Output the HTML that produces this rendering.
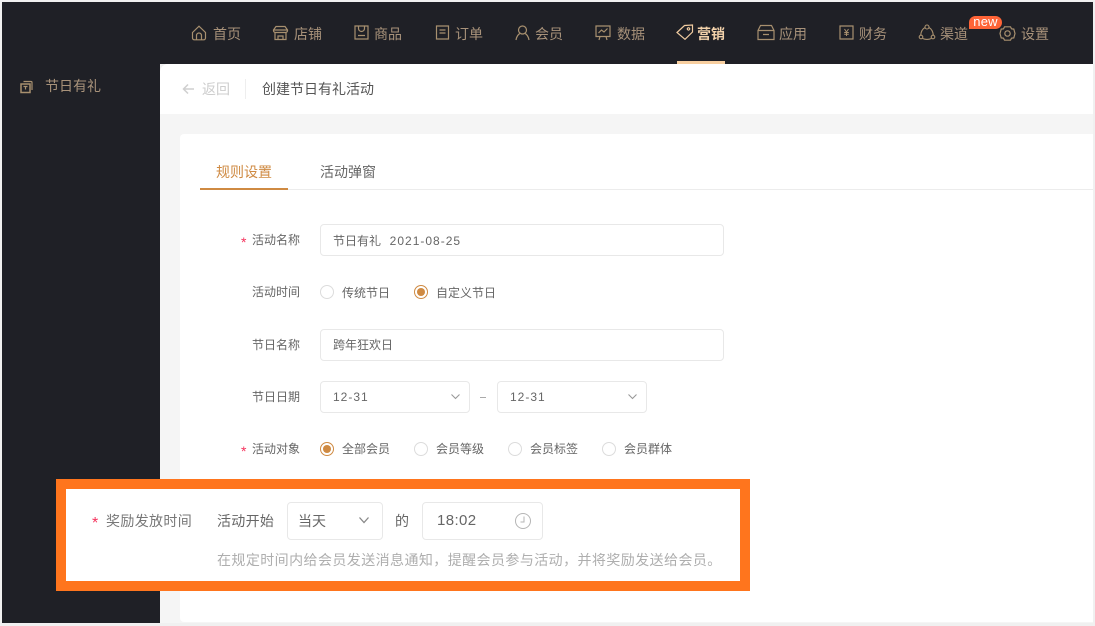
<!DOCTYPE html>
<html><head><meta charset="utf-8">
<style>
html,body{margin:0;padding:0}
body{width:1095px;height:626px;position:relative;overflow:hidden;background:#f0f0f0;font-family:"Liberation Sans","Noto Sans CJK SC",sans-serif;}
.a{position:absolute;white-space:nowrap}
.n{position:absolute;top:24px;height:20px;line-height:20px;font-size:14px;color:#a8927a;white-space:nowrap}
svg.i{position:absolute;fill:none;stroke:#a8906f;stroke-width:1.2}
.l{position:absolute;font-size:12px;line-height:16px;color:#666;white-space:nowrap}
.s{position:absolute;font-size:14px;line-height:16px;color:#f5325c;white-space:nowrap}
.b{position:absolute;box-sizing:border-box;border:1px solid #e8e8e8;border-radius:4px;background:#fff;height:32px;line-height:31px;font-size:12px;color:#666;padding-left:12px;white-space:nowrap}
.d{letter-spacing:1px}
.r{position:absolute;box-sizing:border-box;width:14px;height:14px;border:1px solid #dcdcdc;border-radius:50%;background:#fff}
.r.on{border-color:#cf8a42}
.r.on:after{content:"";position:absolute;left:2px;top:2px;width:8px;height:8px;border-radius:50%;background:#cf8a42}
</style></head><body>
<div class="a" style="left:2px;top:2px;width:1091px;height:62px;background:#1f2026"></div>
<div class="a" style="left:2px;top:64px;width:158px;height:559px;background:#1f2026"></div>
<div class="a" style="left:160px;top:64px;width:933px;height:559px;background:#f5f5f5;border-top-left-radius:8px"></div>
<div class="a" style="left:160px;top:64px;width:933px;height:50px;background:#fff;border-top-left-radius:8px"></div>
<div class="a" style="left:180px;top:134px;width:913px;height:488px;background:#fff;border-radius:4px 0 0 4px"></div>

<svg class="i" style="left:191px;top:25px" width="16" height="16" viewBox="0 0 16 16"><path d="M1.500 7.500 8 1.200l6.500 6.300V13a1.800 1.800 0 0 1-1.800 1.800H3.300A1.800 1.800 0 0 1 1.500 13zM5.500 14.800V10.500a2.500 2.500 0 0 1 5 0v4.300"/></svg>
<div class="n" style="left:213px">首页</div>
<svg class="i" style="left:272px;top:25px" width="17" height="16" viewBox="0 0 17 16"><path d="M4 1.500h9l2.500 3.500v.8a2 2 0 0 1-2.300 1.700H3.800A2 2 0 0 1 1.500 5.800V5zM1.500 5h14M3 7.500v7h11v-7M6 14.500v-3.500h5v3.500"/></svg>
<div class="n" style="left:294px">店铺</div>
<svg class="i" style="left:354px;top:25px" width="15" height="15" viewBox="0 0 15 15"><path d="M1 1h13v13H1zM4.500 1v2.500a3 3 0 0 0 6 0V1M4 10.500h7"/></svg>
<div class="n" style="left:374px">商品</div>
<svg class="i" style="left:435px;top:25px" width="15" height="15" viewBox="0 0 15 15"><path d="M1.500 1h12v13h-12zM4.500 5h6M4.500 8h6"/></svg>
<div class="n" style="left:455px">订单</div>
<svg class="i" style="left:515px;top:25px" width="15" height="16" viewBox="0 0 15 16"><circle cx="7.500" cy="5" r="4"/><path d="M1 15c.5-3.500 2.500-6 4-6.500M14 15c-.5-3.500-2.500-6-4-6.500"/></svg>
<div class="n" style="left:535px">会员</div>
<svg class="i" style="left:595px;top:25px" width="16" height="16" viewBox="0 0 16 16"><path d="M1 1h14v10.500H1zM3.500 8 6.500 5l2.500 2L12.500 3.500M5 11.500 4 15M11 11.500l1 3.500"/></svg>
<div class="n" style="left:617px">数据</div>
<svg class="i" style="left:676px;top:24px;stroke:#f0cba0" width="18" height="16" viewBox="0 0 18 16"><path d="M1 8.500 8.500 1.500 16.500 1v7L9 15.300zM12.500 3.700a1.200 1.200 0 1 0 .01 0"/></svg>
<div class="n" style="left:697px;color:#f3d2ab;font-weight:bold">营销</div>
<div class="a" style="left:677px;top:61px;width:48px;height:3px;background:#f8cfa0"></div>
<svg class="i" style="left:757px;top:24px" width="18" height="17" viewBox="0 0 18 17"><path d="M1 6.500 3.500 1.500h11L17 6.500v9H1zM1 6.500h16M6 10.500h6"/></svg>
<div class="n" style="left:779px">应用</div>
<svg class="i" style="left:839px;top:25px" width="15" height="15" viewBox="0 0 15 15"><path d="M1 1h13v13H1z"/><path stroke-width="1" d="M5.500 4 7.500 7l2-3M5.200 7.500h4.600M5.200 9.300h4.600M7.500 7v4"/></svg>
<div class="n" style="left:859px">财务</div>
<svg class="i" style="left:918px;top:24px;stroke-width:1.100" width="18" height="17" viewBox="0 0 18 17"><circle cx="9" cy="3" r="2"/><circle cx="3" cy="13" r="1.800"/><circle cx="15" cy="13" r="1.800"/><path d="M7 3.500C4.500 5 3 7.500 2.700 11.200M11 3.500c2.500 1.500 4 4 4.300 7.700M4.600 14.500c2.800 1.200 6 1.200 8.800 0"/></svg>
<div class="n" style="left:940px">渠道</div>
<div class="a" style="left:969px;top:16px;width:33px;height:13px;background:#ff6437;border-radius:7px 7px 7px 0;color:#fff;font-size:13px;line-height:11px;text-align:center;letter-spacing:.2px">new</div>
<svg class="i" style="left:999px;top:25px" width="17" height="17" viewBox="0 0 17 17"><path d="M5.500 1.800h6l1 2 2.300.3 1.200 4.400-1.200 4.400-2.300.3-1 2h-6l-1-2-2.300-.3L1 8.500l1.200-4.400 2.300-.3z"/><circle cx="8.500" cy="8.500" r="2.700"/></svg>
<div class="n" style="left:1021px">设置</div>

<svg class="i" style="left:20px;top:80px;stroke:#a8906f" width="13" height="14" viewBox="0 0 13 14"><path d="M3.500 1.500h7.500a1 1 0 0 1 1 1V10"/><path stroke-width="1.500" d="M1 4h9v8.500H1z"/><path d="M3.500 6.500h4M5.500 6.500v3"/></svg>
<div class="a" style="left:45px;top:77px;font-size:14px;line-height:18px;color:#a8927a">节日有礼</div>

<svg class="a" style="left:182px;top:83px" width="13" height="12" viewBox="0 0 13 12" fill="none" stroke="#cfcfcf" stroke-width="1.500"><path d="M1.500 6h10.500M6 1.500 1.500 6 6 10.500"/></svg>
<div class="a" style="left:202px;top:80px;font-size:14px;line-height:18px;color:#cdcdcd">返回</div>
<div class="a" style="left:245px;top:79px;width:1px;height:20px;background:#eeeeee"></div>
<div class="a" style="left:262px;top:80px;font-size:14px;line-height:18px;color:#555">创建节日有礼活动</div>

<div class="a" style="left:216px;top:163px;font-size:14px;line-height:18px;color:#cf8a42">规则设置</div>
<div class="a" style="left:320px;top:163px;font-size:14px;line-height:18px;color:#666">活动弹窗</div>
<div class="a" style="left:200px;top:189px;width:893px;height:1px;background:#ececec"></div>
<div class="a" style="left:200px;top:188px;width:88px;height:2px;background:#cf8a42"></div>

<div class="s" style="left:241px;top:234px">*</div>
<div class="l" style="left:252px;top:232px">活动名称</div>
<div class="b" style="left:320px;top:224px;width:404px;line-height:32px">节日有礼&nbsp;&nbsp;<span class="d" style="margin-left:2px">2021-08-25</span></div>

<div class="l" style="left:252px;top:284px">活动时间</div>
<div class="r" style="left:320px;top:285px"></div>
<div class="l" style="left:342px;top:285px">传统节日</div>
<div class="r on" style="left:414px;top:285px"></div>
<div class="l" style="left:436px;top:285px">自定义节日</div>

<div class="l" style="left:252px;top:337px">节日名称</div>
<div class="b" style="left:320px;top:329px;width:404px">跨年狂欢日</div>

<div class="l" style="left:252px;top:389px">节日日期</div>
<div class="b" style="left:320px;top:381px;width:150px"><span class="d">12-31</span></div>
<svg class="a" style="left:450px;top:393px" width="11" height="8" viewBox="0 0 11 8" fill="none" stroke="#999" stroke-width="1.100"><path d="M1.500 1.500 5.500 5.500 9.500 1.500"/></svg>
<div class="a" style="left:480px;top:397px;width:6px;height:1px;background:#aaa"></div>
<div class="b" style="left:497px;top:381px;width:150px"><span class="d">12-31</span></div>
<svg class="a" style="left:627px;top:393px" width="11" height="8" viewBox="0 0 11 8" fill="none" stroke="#999" stroke-width="1.100"><path d="M1.500 1.500 5.500 5.500 9.500 1.500"/></svg>

<div class="s" style="left:241px;top:443px">*</div>
<div class="l" style="left:252px;top:441px">活动对象</div>
<div class="r on" style="left:320px;top:442px"></div>
<div class="l" style="left:342px;top:441px">全部会员</div>
<div class="r" style="left:414px;top:442px"></div>
<div class="l" style="left:436px;top:441px">会员等级</div>
<div class="r" style="left:508px;top:442px"></div>
<div class="l" style="left:530px;top:441px">会员标签</div>
<div class="r" style="left:602px;top:442px"></div>
<div class="l" style="left:624px;top:441px">会员群体</div>

<div class="a" style="left:56px;top:479px;width:694px;height:112px;box-sizing:border-box;border:10px solid #ff751d;background:#fff"></div>
<div class="s" style="left:92px;top:515px;font-size:16px;line-height:18px">*</div>
<div class="a" style="left:106px;top:512px;font-size:14px;line-height:18px;color:#777;letter-spacing:.35px">奖励发放时间</div>
<div class="a" style="left:217px;top:512px;font-size:14px;line-height:18px;color:#666;letter-spacing:.3px">活动开始</div>
<div class="b" style="left:287px;top:502px;width:96px;height:38px;line-height:36px;font-size:14px;padding-left:10px">当天</div>
<svg class="a" style="left:358px;top:516px" width="12" height="9" viewBox="0 0 12 9" fill="none" stroke="#888" stroke-width="1.300"><path d="M1.500 1.500 6 6.500 10.500 1.500"/></svg>
<div class="a" style="left:395px;top:512px;font-size:14px;line-height:18px;color:#666">的</div>
<div class="b" style="left:422px;top:502px;width:121px;height:38px;line-height:36px;font-size:15px;padding-left:14px;letter-spacing:.4px">18:02</div>
<svg class="a" style="left:514px;top:512px" width="18" height="18" viewBox="0 0 18 18" fill="none" stroke="#b5b5b5" stroke-width="1"><circle cx="9" cy="9" r="7.500"/><path d="M10 4.500V10H6.500"/></svg>
<div class="a" style="left:217px;top:551px;font-size:14px;line-height:18px;color:#aeaeae;letter-spacing:.42px">在规定时间内给会员发送消息通知，提醒会员参与活动，并将奖励发送给会员。</div>
</body></html>
